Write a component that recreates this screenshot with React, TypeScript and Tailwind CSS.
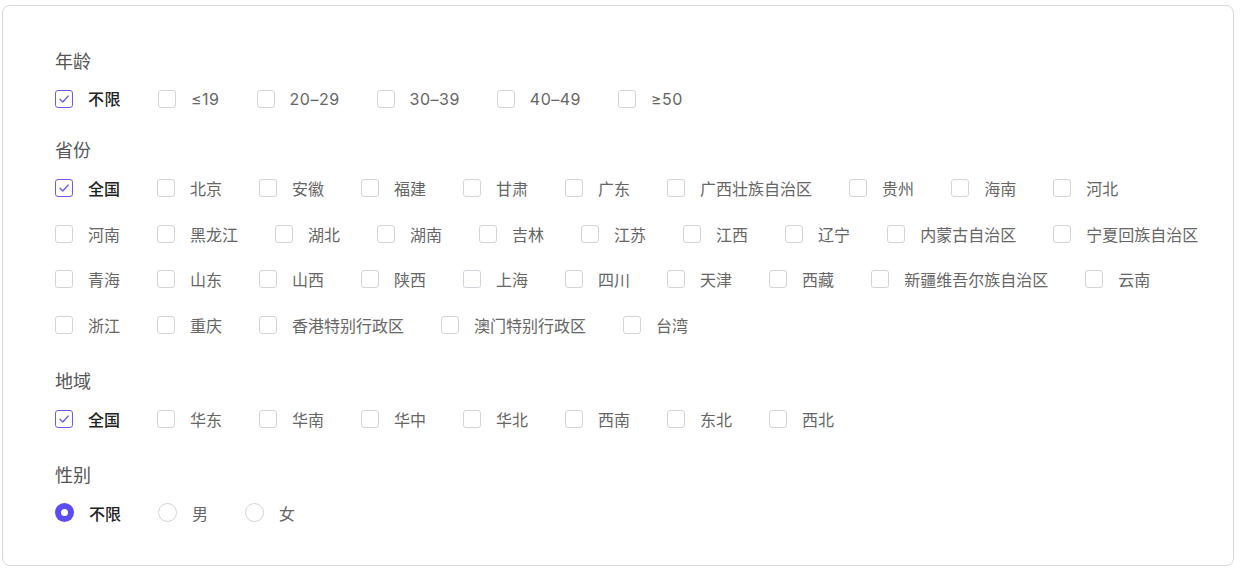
import { useState } from "react";

const AGES = ["不限", "≤19", "20–29", "30–39", "40–49", "≥50"];
const PROVINCES = [
  "全国", "北京", "安徽", "福建", "甘肃", "广东", "广西壮族自治区", "贵州", "海南", "河北",
  "河南", "黑龙江", "湖北", "湖南", "吉林", "江苏", "江西", "辽宁", "内蒙古自治区", "宁夏回族自治区",
  "青海", "山东", "山西", "陕西", "上海", "四川", "天津", "西藏", "新疆维吾尔族自治区", "云南",
  "浙江", "重庆", "香港特别行政区", "澳门特别行政区", "台湾",
];
const REGIONS = ["全国", "华东", "华南", "华中", "华北", "西南", "东北", "西北"];
const GENDERS = ["不限", "男", "女"];

function CheckItem({ label, checked, onToggle }: { label: string; checked: boolean; onToggle: () => void }) {
  return (
    <button type="button" onClick={onToggle} className="flex h-[28px] items-center gap-[15px]">
      <span
        className={`flex h-[18px] w-[18px] shrink-0 items-center justify-center rounded-[3px] border bg-white ${
          checked ? "border-[#6b5cf6]" : "border-[#d1d4da]"
        }`}
      >
        {checked ? (
          <svg viewBox="0 0 12 12" className="h-[12px] w-[12px]" fill="none">
            <path d="M2 6.2 4.8 9 10.2 3" stroke="#6b5cf6" strokeWidth="1.3" strokeLinecap="round" strokeLinejoin="round" />
          </svg>
        ) : null}
      </span>
      <span className={`whitespace-nowrap text-[16px] leading-[24px] ${checked ? "font-medium text-[#222]" : "text-[#666]"}`}>
        {label}
      </span>
    </button>
  );
}

function RadioItem({ label, checked, onPick }: { label: string; checked: boolean; onPick: () => void }) {
  return (
    <button type="button" onClick={onPick} className="flex h-[28px] items-center gap-[15px]">
      <span
        className={`flex h-[19px] w-[19px] shrink-0 items-center justify-center rounded-full ${
          checked ? "bg-[#5b4cf5]" : "border border-[#d1d4da] bg-white"
        }`}
      >
        {checked ? <span className="h-[7px] w-[7px] rounded-full bg-white" /> : null}
      </span>
      <span className={`whitespace-nowrap text-[16px] leading-[24px] ${checked ? "font-medium text-[#222]" : "text-[#666]"}`}>
        {label}
      </span>
    </button>
  );
}

function Title({ children }: { children: string }) {
  return <div className="text-[18px] leading-[26px] text-[#555]">{children}</div>;
}

export default function App() {
  const [ages, setAges] = useState<string[]>(["不限"]);
  const [provinces, setProvinces] = useState<string[]>(["全国"]);
  const [regions, setRegions] = useState<string[]>(["全国"]);
  const [gender, setGender] = useState("不限");

  const toggle = (list: string[], set: (v: string[]) => void, v: string) =>
    set(list.includes(v) ? list.filter((x) => x !== v) : [...list, v]);

  return (
    <div className="min-h-screen bg-white" style={{ fontFamily: '"Noto Sans CJK SC", "Noto Sans", sans-serif' }}>
      <div className="ml-[2px] mt-[5px] h-[561px] w-[1232px] rounded-[8px] border border-[#d6d8dc] pl-[52px] pr-[24px] pt-[41px]">
        <Title>年龄</Title>
        <div className="mt-[12px] flex flex-wrap gap-x-[37px] font-['Inter','Noto_Sans_CJK_SC',sans-serif] tracking-[0.5px]">
          {AGES.map((a) => (
            <CheckItem key={a} label={a} checked={ages.includes(a)} onToggle={() => toggle(ages, setAges, a)} />
          ))}
        </div>

        <div className="mt-[23px]">
          <Title>省份</Title>
        </div>
        <div className="mt-[12px] flex flex-wrap gap-x-[37px] gap-y-[17.5px]">
          {PROVINCES.map((p) => (
            <CheckItem key={p} label={p} checked={provinces.includes(p)} onToggle={() => toggle(provinces, setProvinces, p)} />
          ))}
        </div>

        <div className="mt-[28px]">
          <Title>地域</Title>
        </div>
        <div className="mt-[12px] flex flex-wrap gap-x-[37px]">
          {REGIONS.map((r) => (
            <CheckItem key={r} label={r} checked={regions.includes(r)} onToggle={() => toggle(regions, setRegions, r)} />
          ))}
        </div>

        <div className="mt-[28px]">
          <Title>性别</Title>
        </div>
        <div className="mt-[12px] flex flex-wrap gap-x-[37px]">
          {GENDERS.map((g) => (
            <RadioItem key={g} label={g} checked={gender === g} onPick={() => setGender(g)} />
          ))}
        </div>
      </div>
    </div>
  );
}
